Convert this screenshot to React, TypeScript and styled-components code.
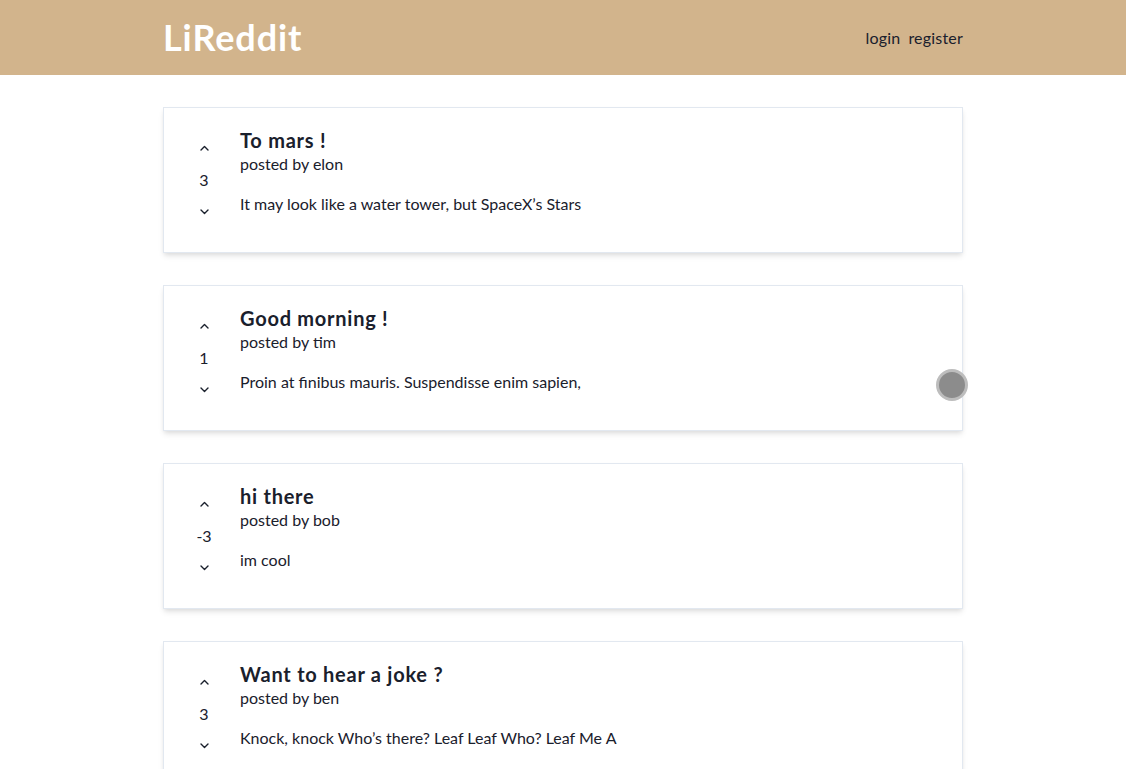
import React from 'react';
import styled, { createGlobalStyle } from 'styled-components';

const posts = [
  { id: 1, title: 'To mars !', creator: 'elon', points: 3, text: 'It may look like a water tower, but SpaceX\u2019s Stars' },
  { id: 2, title: 'Good morning !', creator: 'tim', points: 1, text: 'Proin at finibus mauris. Suspendisse enim sapien,' },
  { id: 3, title: 'hi there', creator: 'bob', points: -3, text: 'im cool' },
  { id: 4, title: 'Want to hear a joke ?', creator: 'ben', points: 3, text: 'Knock, knock Who\u2019s there? Leaf Leaf Who? Leaf Me A' },
];

const GlobalStyle = createGlobalStyle`
  body {
    margin: 0;
    font-family: Lato, "Open Sans", sans-serif;
    color: #1a202c;
    background: #fff;
  }
`;

const Chevron = ({ up }: { up?: boolean }) => (
  <svg width="9" height="6" viewBox="0 0 9 6" fill="none">
    <path
      d={up ? 'M1 5L4.5 1.5L8 5' : 'M1 1L4.5 4.5L8 1'}
      stroke="#1a202c"
      strokeWidth="1.4"
      strokeLinecap="round"
      strokeLinejoin="round"
    />
  </svg>
);

export default function App() {
  return (
    <>
      <GlobalStyle />
      <NavBar>
        <NavInner>
          <Logo>LiReddit</Logo>
          <NavLinks>
            <NavLink>login</NavLink>
            <NavLink>register</NavLink>
          </NavLinks>
        </NavInner>
      </NavBar>
      <Wrapper>
        <Stack>
          {posts.map((p) => (
            <Card key={p.id}>
              <Votes>
                <VoteButton aria-label="updoot">
                  <Chevron up />
                </VoteButton>
                <Points>{p.points}</Points>
                <VoteButton aria-label="downdoot">
                  <Chevron />
                </VoteButton>
              </Votes>
              <Body>
                <Title>{p.title}</Title>
                <Meta>posted by {p.creator}</Meta>
                <Snippet>{p.text}</Snippet>
              </Body>
            </Card>
          ))}
        </Stack>
      </Wrapper>
      <Touch />
    </>
  );
}

const NavBar = styled.div`
  background: #d2b48c;
  padding: 16px;
`;

const NavInner = styled.div`
  max-width: 800px;
  margin: 0 auto;
  display: flex;
  align-items: center;
`;

const Logo = styled.h1`
  margin: 0;
  font-size: 36px;
  line-height: 1.2;
  font-weight: 700;
  letter-spacing: 0.9px;
  color: #fff;
`;

const NavLinks = styled.div`
  margin-left: auto;
  display: flex;
  gap: 8px;
  padding-bottom: 0;
  letter-spacing: 0.2px;
`;

const NavLink = styled.a`
  font-size: 16px;
  color: #1a202c;
  cursor: pointer;
`;

const Wrapper = styled.div`
  max-width: 800px;
  margin: 32px auto 0;
`;

const Stack = styled.div`
  display: flex;
  flex-direction: column;
  gap: 32px;
`;

const Card = styled.div`
  display: flex;
  padding: 20px;
  border: 1px solid #e2e8f0;
  box-shadow: 0 4px 6px -1px rgba(0, 0, 0, 0.1), 0 2px 4px -1px rgba(0, 0, 0, 0.06);
`;

const Votes = styled.div`
  display: flex;
  flex-direction: column;
  align-items: center;
  justify-content: center;
  margin-right: 16px;
`;

const VoteButton = styled.button`
  width: 40px;
  height: 40px;
  border: none;
  background: transparent;
  padding: 0;
  display: flex;
  align-items: center;
  justify-content: center;
`;

const Points = styled.div`
  font-size: 16px;
  line-height: 24px;
`;

const Body = styled.div`
  flex: 1;
`;

const Title = styled.h2`
  margin: 0;
  font-size: 20px;
  line-height: 1.2;
  font-weight: 700;
  letter-spacing: 0.75px;
`;

const Meta = styled.p`
  margin: 0;
  font-size: 16px;
  line-height: 24px;
`;

const Snippet = styled.p`
  margin: 16px 0 0;
  font-size: 16px;
  line-height: 24px;
`;

const Touch = styled.div`
  position: absolute;
  left: 936px;
  top: 369px;
  width: 26px;
  height: 26px;
  border-radius: 50%;
  background: #8c8c8c;
  border: 3px solid #bdbdbd;
`;
